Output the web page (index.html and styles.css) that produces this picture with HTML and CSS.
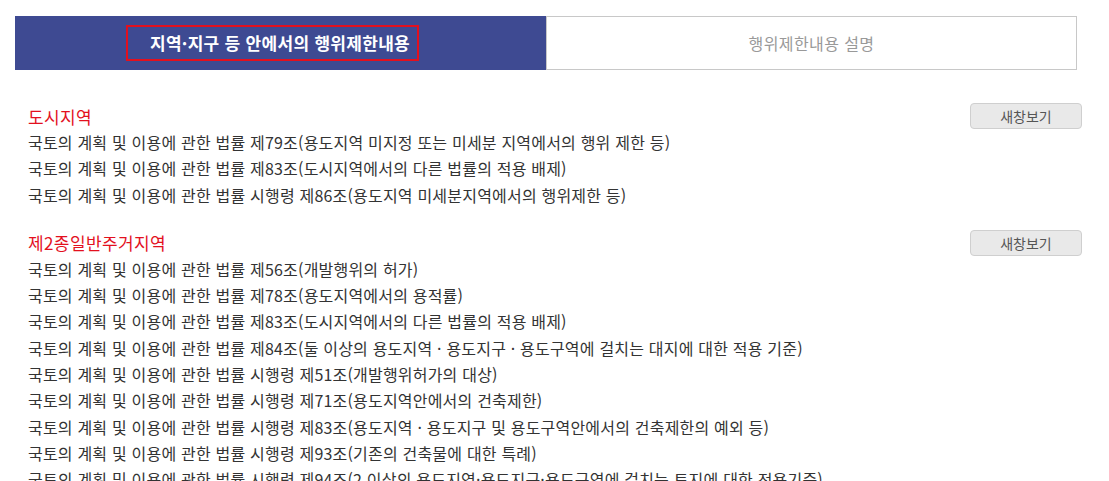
FILE: index.html
```html
<!DOCTYPE html>
<html lang="ko">
<head>
    <meta charset="UTF-8">
    <title>행위제한내용</title>
    <link rel="stylesheet" href="styles.css">
</head>
<body>
    <!-- Tabs -->
    <div class="tabs">
        <div class="tab active"><span class="tab-label">지역·지구 등 안에서의 행위제한내용</span></div>
        <div class="tab">행위제한내용 설명</div>
    </div>

    <!-- Law list -->
    <div class="content">
        <div class="section">
            <div class="section-head">
                <h3>도시지역</h3>
                <button type="button">새창보기</button>
            </div>
            <ul>
                <li>국토의 계획 및 이용에 관한 법률 제79조(용도지역 미지정 또는 미세분 지역에서의 행위 제한 등)</li>
                <li>국토의 계획 및 이용에 관한 법률 제83조(도시지역에서의 다른 법률의 적용 배제)</li>
                <li>국토의 계획 및 이용에 관한 법률 시행령 제86조(용도지역 미세분지역에서의 행위제한 등)</li>
            </ul>
        </div>
        <div class="section">
            <div class="section-head">
                <h3>제2종일반주거지역</h3>
                <button type="button">새창보기</button>
            </div>
            <ul>
                <li>국토의 계획 및 이용에 관한 법률 제56조(개발행위의 허가)</li>
                <li>국토의 계획 및 이용에 관한 법률 제78조(용도지역에서의 용적률)</li>
                <li>국토의 계획 및 이용에 관한 법률 제83조(도시지역에서의 다른 법률의 적용 배제)</li>
                <li>국토의 계획 및 이용에 관한 법률 제84조(둘 이상의 용도지역 · 용도지구 · 용도구역에 걸치는 대지에 대한 적용 기준)</li>
                <li>국토의 계획 및 이용에 관한 법률 시행령 제51조(개발행위허가의 대상)</li>
                <li>국토의 계획 및 이용에 관한 법률 시행령 제71조(용도지역안에서의 건축제한)</li>
                <li>국토의 계획 및 이용에 관한 법률 시행령 제83조(용도지역 · 용도지구 및 용도구역안에서의 건축제한의 예외 등)</li>
                <li>국토의 계획 및 이용에 관한 법률 시행령 제93조(기존의 건축물에 대한 특례)</li>
                <li>국토의 계획 및 이용에 관한 법률 시행령 제94조(2 이상의 용도지역·용도지구·용도구역에 걸치는 토지에 대한 적용기준)</li>
            </ul>
        </div>
    </div>
</body>
</html>
```

FILE: styles.css
```css
/* General */
body {
    margin: 0;
    font-family: "Noto Sans CJK KR", "Noto Sans", sans-serif;
    color: #333;
    background: #fff;
    overflow: hidden;
}

/* Tabs */
.tabs {
    display: flex;
    margin: 16px 32px 0 15px;
    height: 54px;
}

.tab {
    flex: 1;
    display: flex;
    justify-content: center;
    align-items: center;
    font-size: 16px;
    letter-spacing: 0.4px;
    color: #999;
    border: 1px solid #c8c8c8;
    box-sizing: border-box;
}

.tab.active {
    background-color: #3e4a92;
    border-color: #3e4a92;
    color: #fff;
    font-weight: bold;
    font-size: 17px;
    letter-spacing: 0.3px;
}

.tab-label {
    border: 2px solid #e3101e;
    padding: 3px 7px 4px 22px;
    margin-right: 16px;
}

/* Content */
.content {
    padding: 33px 27px 0 28px;
}

.section {
    margin-bottom: 22px;
}

.section-head {
    display: flex;
    justify-content: space-between;
    align-items: center;
    height: 26px;
}

.section-head h3 {
    margin: 0;
    font-size: 17px;
    font-weight: normal;
    letter-spacing: 0.4px;
    color: #e3101e;
}

.section-head button {
    width: 112px;
    height: 26px;
    font-family: inherit;
    font-size: 14px;
    color: #555;
    background-color: #e9e9e9;
    border: 1px solid #cfcfcf;
    border-radius: 4px;
    cursor: pointer;
}

ul {
    list-style: none;
    margin: 0;
    padding: 0;
}

li {
    font-size: 16px;
    letter-spacing: 0.2px;
    line-height: 26.3px;
    white-space: nowrap;
}
```
